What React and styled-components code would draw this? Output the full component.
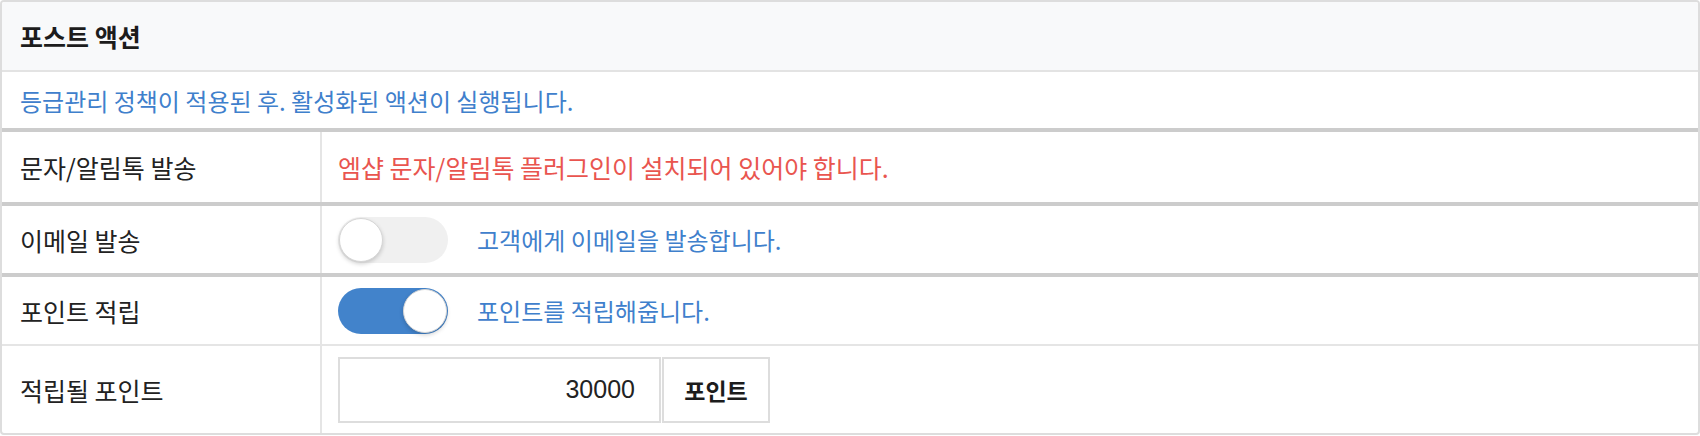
import React from 'react';
import styled, { createGlobalStyle } from 'styled-components';

const GlobalStyle = createGlobalStyle`
  html, body {
    margin: 0;
    padding: 0;
    background: #ffffff;
  }
  body {
    font-family: "Noto Sans CJK KR", "Noto Sans", sans-serif;
    color: #222222;
  }
`;

const Panel = styled.section`
  width: 1700px;
  box-sizing: border-box;
  border: 2px solid #dddddd;
  border-radius: 4px;
  overflow: hidden;
  background: #ffffff;
`;

const PanelHeading = styled.header`
  height: 68px;
  display: flex;
  align-items: center;
  padding: 0 18px;
  background: #f8f9fa;
  border-bottom: 2px solid #e3e3e3;
  font-size: 25px;
  font-weight: 700;
  color: #1c1c1c;
`;

const Notice = styled.div`
  height: 56px;
  display: flex;
  align-items: center;
  padding: 0 18px;
  font-size: 24px;
  color: #3f80cc;
`;

const Row = styled.div`
  display: grid;
  grid-template-columns: 320px 1fr;
  height: ${({ $height }) => $height}px;
  border-top: ${({ $thick }) => ($thick ? '4px solid #cccccc' : '2px solid #e5e5e5')};
`;

const LabelCell = styled.div`
  display: flex;
  align-items: center;
  padding: 0 18px;
  border-right: 2px solid #e5e5e5;
  font-size: 25px;
  color: #222222;
`;

const ValueCell = styled.div`
  display: flex;
  align-items: center;
  gap: 29px;
  padding: 0 16px;
`;

const Message = styled.span`
  font-size: ${({ $tone }) => ($tone === 'danger' ? '25px' : '24px')};
  color: ${({ $tone }) => ($tone === 'danger' ? '#e9554f' : '#3f80cc')};
`;

const Switch = styled.span`
  position: relative;
  display: inline-block;
  flex: none;
  width: 110px;
  height: 46px;
  border-radius: 23px;
  background: ${({ $on }) => ($on ? '#4283cb' : '#f0f0f0')};
`;

const Knob = styled.span`
  position: absolute;
  top: 1px;
  left: ${({ $on }) => ($on ? '65px' : '1px')};
  width: 44px;
  height: 44px;
  box-sizing: border-box;
  border-radius: 50%;
  background: #ffffff;
  border: 1px solid #d6d6d6;
  box-shadow: 0 2px 4px rgba(0, 0, 0, 0.18);
`;

const InputGroup = styled.div`
  display: flex;
  height: 66px;
`;

const NumberInput = styled.div`
  width: 323px;
  box-sizing: border-box;
  display: flex;
  align-items: center;
  justify-content: flex-end;
  padding: 0 24px;
  border: 2px solid #dddddd;
  font-family: "Liberation Sans", Arial, sans-serif;
  font-size: 25px;
  color: #222222;
`;

const Addon = styled.div`
  width: 108px;
  box-sizing: border-box;
  display: flex;
  align-items: center;
  justify-content: center;
  margin-left: 1px;
  border: 2px solid #dddddd;
  font-size: 23px;
  font-weight: 700;
  color: #1c1c1c;
`;

const Toggle = ({ on }) => (
  <Switch $on={on}>
    <Knob $on={on} />
  </Switch>
);

export default function App() {
  return (
    <>
      <GlobalStyle />
      <Panel>
        <PanelHeading>포스트 액션</PanelHeading>
        <Notice>등급관리 정책이 적용된 후. 활성화된 액션이 실행됩니다.</Notice>

        <Row $thick $height={70}>
          <LabelCell>문자/알림톡 발송</LabelCell>
          <ValueCell>
            <Message $tone="danger">엠샵 문자/알림톡 플러그인이 설치되어 있어야 합니다.</Message>
          </ValueCell>
        </Row>

        <Row $thick $height={67}>
          <LabelCell>이메일 발송</LabelCell>
          <ValueCell>
            <Toggle on={false} />
            <Message>고객에게 이메일을 발송합니다.</Message>
          </ValueCell>
        </Row>

        <Row $thick $height={67}>
          <LabelCell>포인트 적립</LabelCell>
          <ValueCell>
            <Toggle on />
            <Message>포인트를 적립해줍니다.</Message>
          </ValueCell>
        </Row>

        <Row $height={87}>
          <LabelCell>적립될 포인트</LabelCell>
          <ValueCell>
            <InputGroup>
              <NumberInput>30000</NumberInput>
              <Addon>포인트</Addon>
            </InputGroup>
          </ValueCell>
        </Row>
      </Panel>
    </>
  );
}
